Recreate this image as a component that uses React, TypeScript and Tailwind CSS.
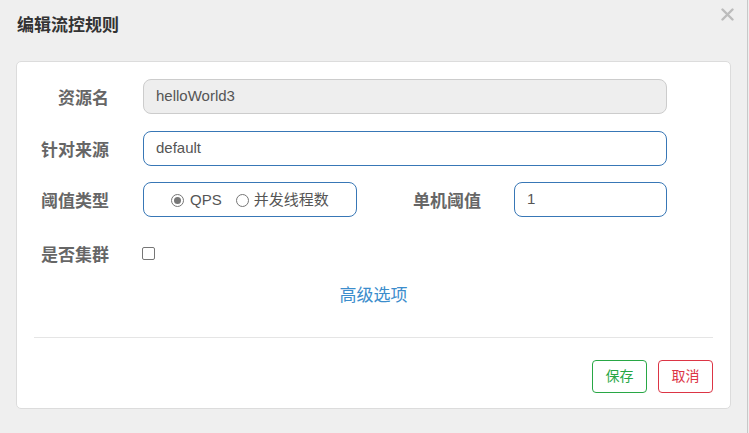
import React from "react";

const font = { fontFamily: '"Liberation Sans", "Noto Sans CJK SC", sans-serif' };

function Label({ children, className = "" }: { children: React.ReactNode; className?: string }) {
  return (
    <div className={"pt-[5px] text-right text-[17px] font-bold leading-[24px] text-[#666] " + className}>
      {children}
    </div>
  );
}

function Radio({ checked }: { checked?: boolean }) {
  return (
    <span className="flex h-[13px] w-[13px] items-center justify-center rounded-full border border-[#767676] bg-white">
      {checked && <span className="h-[7px] w-[7px] rounded-full bg-[#777]" />}
    </span>
  );
}

export default function App() {
  return (
    <div className="flex h-[433px] w-[749px] overflow-hidden bg-[#efefef]" style={font}>
      <div className="flex w-[747px] flex-col">
        <div className="flex h-[61px] items-start justify-between">
          <h4 className="pl-[17px] pt-[14px] text-[17px] font-bold leading-[24px] text-[#333]">编辑流控规则</h4>
          <button className="mr-[13px] mt-[8px] flex h-[13px] w-[13px] items-center justify-center">
            <svg width="13" height="13" viewBox="0 0 13 13">
              <path d="M1.5 1.5 L11.5 11.5 M11.5 1.5 L1.5 11.5" stroke="#bcbcbc" strokeWidth="2.4" strokeLinecap="round" />
            </svg>
          </button>
        </div>
        <div className="ml-[16px] flex h-[348px] w-[715px] flex-col rounded-[5px] border border-[#dcdcdc] bg-white px-[17px] pt-[17px]">
          {/* row 1 */}
          <div className="flex h-[35px] items-center">
            <Label className="w-[75px]">资源名</Label>
            <div className="ml-[34px] flex h-[35px] w-[524px] items-center rounded-[8px] border border-[#cccccc] bg-[#eeeeee] px-[12px] text-[15px] text-[#555]">
              helloWorld3
            </div>
          </div>
          {/* row 2 */}
          <div className="mt-[17px] flex h-[35px] items-center">
            <Label className="w-[75px]">针对来源</Label>
            <div className="ml-[34px] flex h-[35px] w-[524px] items-center rounded-[8px] border border-[#3877b6] bg-white px-[12px] text-[15px] text-[#555]">
              default
            </div>
          </div>
          {/* row 3 */}
          <div className="mt-[16px] flex h-[35px] items-center">
            <Label className="w-[75px]">阈值类型</Label>
            <div className="ml-[34px] flex h-[35px] w-[214px] items-center rounded-[8px] border border-[#3877b6] bg-white pl-[27px] pt-[2px] text-[15px] text-[#555]">
              <Radio checked />
              <span className="ml-[6px]">QPS</span>
              <span className="ml-[14px]"><Radio /></span>
              <span className="ml-[5px]">并发线程数</span>
            </div>
            <Label className="w-[124px]">单机阈值</Label>
            <div className="ml-[33px] flex h-[35px] w-[153px] items-center rounded-[8px] border border-[#3877b6] bg-white px-[12px] text-[15px] text-[#555]">
              1
            </div>
          </div>
          {/* row 4 */}
          <div className="mt-[19px] flex h-[35px] items-center">
            <Label className="w-[75px] pt-0">是否集群</Label>
            <div className="ml-[33px] h-[13px] w-[13px] rounded-[2px] border border-[#767676] bg-white" />
          </div>
          {/* advanced */}
          <div className="mt-[13px] flex h-[24px] justify-center">
            <a className="text-[17px] leading-[24px] text-[#3c8dcc]">高级选项</a>
          </div>
          <div className="mt-[29px] h-px w-full bg-[#e5e5e5]" />
          <div className="mt-[22px] flex justify-end gap-[11px]">
            <button className="flex h-[33px] w-[55px] items-center justify-center rounded-[4px] border border-[#28a745] text-[14px] text-[#28a745]">
              保存
            </button>
            <button className="flex h-[33px] w-[55px] items-center justify-center rounded-[4px] border border-[#dc3545] text-[14px] text-[#dc3545]">
              取消
            </button>
          </div>
        </div>
      </div>
      <div className="h-full w-px bg-[#c8c8c8]" />
      <div className="h-full w-px bg-[#efefef]" />
    </div>
  );
}
